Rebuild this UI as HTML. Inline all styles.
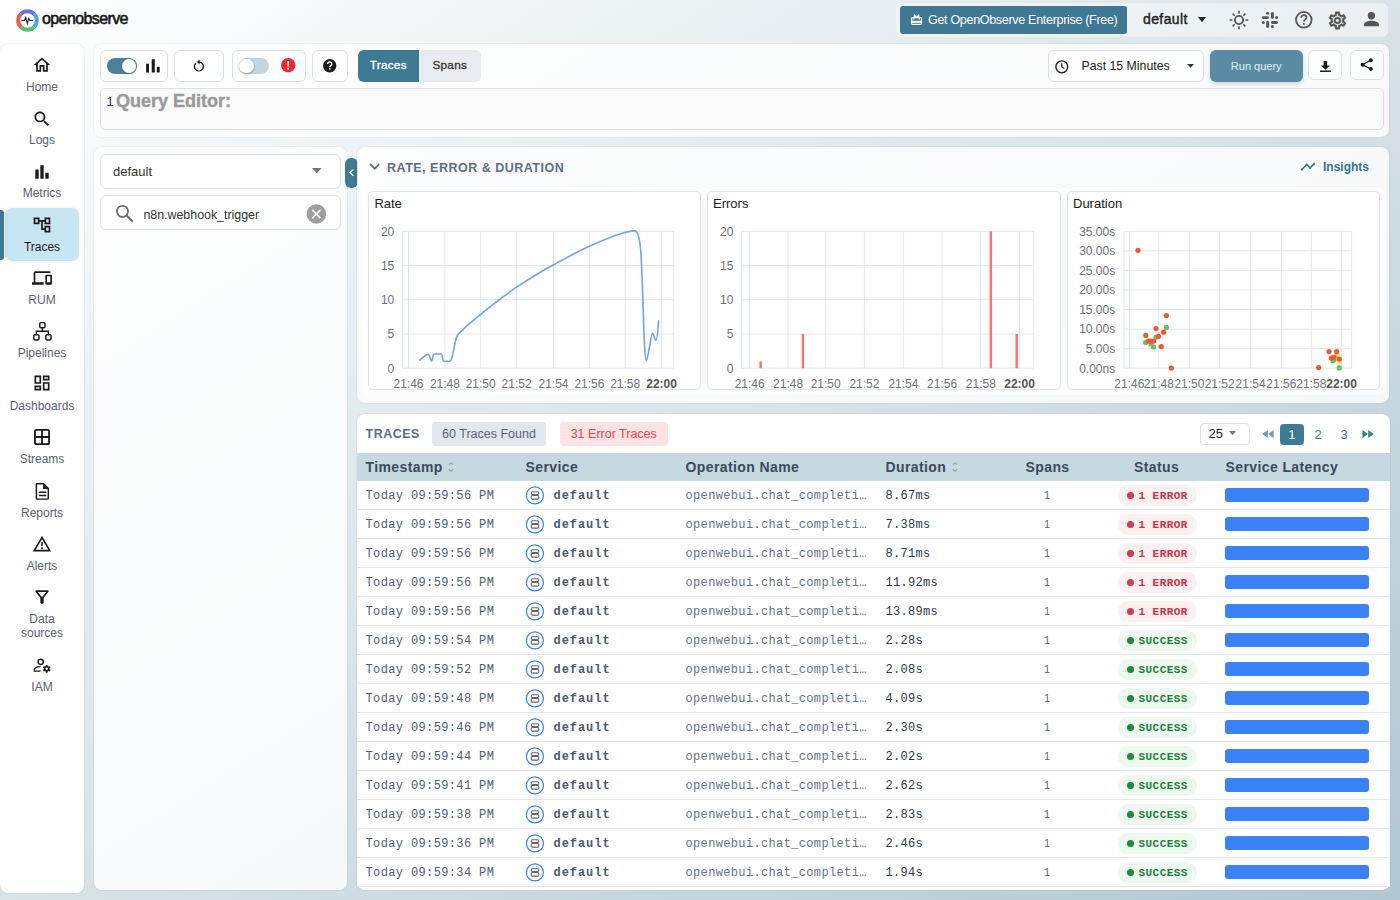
<!DOCTYPE html>
<html><head><meta charset="utf-8">
<style>
*{box-sizing:border-box;margin:0;padding:0}
html,body{width:1400px;height:900px;overflow:hidden}
body{font-family:"Liberation Sans",sans-serif;background:linear-gradient(to bottom right,#ffffff 0%,#d9e3e8 50%,#b0c7d2 100%);position:relative;color:#222}
.a{position:absolute}
.panel{position:absolute;background:rgba(255,255,255,0.8);border-radius:8px;box-shadow:0 0 2px rgba(0,0,0,0.13)}
svg{display:block;overflow:visible}
.nav{position:absolute;left:0;width:84px;text-align:center;font-size:12px;line-height:14px;color:#5b6272}
.nav svg{position:absolute;left:33px}
.nav span{position:absolute;left:0;width:84px}
.btn{position:absolute;border:1px solid #dcdfe3;border-radius:6px;background:rgba(255,255,255,0.6)}
.mono{font-family:"Liberation Mono",monospace}
.row{position:absolute;left:357px;width:1033px;height:29px;border-bottom:1px solid #e3e6ea;background:#fff}
.row div{position:absolute;top:0;line-height:30px;white-space:nowrap}
.ts{left:8.5px;font-size:12px;letter-spacing:0.37px;color:#4f5e73}
.svc{left:168px;top:5px!important}
.svn{left:196.5px;font-size:12px;font-weight:bold;letter-spacing:0.95px;color:#4d5a6c}
.op{left:328.5px;top:0.7px!important;font-size:12px;letter-spacing:0.35px;color:#667488}
.du{left:528.5px;top:0.7px!important;font-size:12px;letter-spacing:0.3px;color:#2d3a4c}
.sp{left:680px;width:20px;text-align:center;font-size:11px;line-height:28.5px!important;color:#5b6b80}
.badge{left:760.5px;top:4.5px!important;width:79.5px;height:20.5px;border-radius:10px;line-height:20.5px!important}
.badge i{position:absolute;left:9.5px;top:6.5px;width:7px;height:7px;border-radius:50%}
.badge b{position:absolute;left:21px;top:1px;font-size:11px;letter-spacing:0.45px;font-family:"Liberation Mono",monospace}
.err{background:#fdf0f1}
.err i{background:#d43a4d}
.err b{color:#cf3048}
.ok{background:#edf8ef}
.ok i{background:#1f8a3c}
.ok b{color:#1f7f38}
.lat{left:868px;top:7.5px!important;width:144px;height:14px;background:#3b82f6;border-radius:3px}
</style></head><body>

<!-- logo -->
<div class="a" style="left:16px;top:9px;width:23px;height:23px">
<svg width="23" height="23" viewBox="0 0 23 23">
<circle cx="11.5" cy="11.5" r="9.3" fill="none" stroke="#6c6fe0" stroke-width="4" stroke-dasharray="14.6 58.4" transform="rotate(-135 11.5 11.5)"/>
<circle cx="11.5" cy="11.5" r="9.3" fill="none" stroke="#42a5f5" stroke-width="4" stroke-dasharray="14.6 58.4" transform="rotate(-45 11.5 11.5)"/>
<circle cx="11.5" cy="11.5" r="9.3" fill="none" stroke="#5bbd6b" stroke-width="4" stroke-dasharray="14.6 58.4" transform="rotate(45 11.5 11.5)"/>
<circle cx="11.5" cy="11.5" r="9.3" fill="none" stroke="#ef5a4d" stroke-width="4" stroke-dasharray="14.6 58.4" transform="rotate(135 11.5 11.5)"/>
<path d="M5.5 11.5h3l1.2-3 1.6 6 1.4-5 1 2h3.5" fill="none" stroke="#222" stroke-width="1.1"/>
</svg></div>
<div class="a" style="left:42px;top:9.5px;font-size:16px;letter-spacing:-0.6px;-webkit-text-stroke:0.55px #111;color:#111">openobserve</div>

<!-- header right -->
<div class="a" style="left:896px;top:3px;width:492px;height:34px;background:rgba(255,255,255,0.45);border-radius:6px"></div>
<div class="a" style="left:900px;top:6px;width:227px;height:28px;background:#3e7894;border-radius:3px;color:#fff;font-size:12.5px;letter-spacing:-0.3px;line-height:28px;padding-left:28px">Get OpenObserve Enterprise (Free)</div>
<div class="a" style="left:1143px;top:11px;font-size:14px;letter-spacing:0.4px;-webkit-text-stroke:0.4px #222;color:#222">default</div>


<!-- header icons -->
<svg class="a" style="left:905px;top:8px" width="24" height="24" viewBox="0 0 24 24"><rect x="6.7" y="9.7" width="9.8" height="6.6" rx="0.8" stroke="#fff" stroke-width="1.2" fill="none"/><rect x="6.7" y="12.8" width="9.8" height="2" fill="#fff"/><path d="M8.7 11.6L9.6 6.9L11.6 9.6L13.6 6.9L14.5 11.6" stroke="#fff" stroke-width="1.1" fill="none" stroke-linejoin="round"/></svg>
<svg class="a" style="left:1198.3px;top:17.4px" width="8" height="5.2" viewBox="0 0 8 5.2"><path fill="#222" d="M0 0h8L4 5.2z"/></svg>
<svg class="a" style="left:1229.4px;top:10.1px" width="20" height="20" viewBox="0 0 20 20"><circle cx="10" cy="10" r="4.1" fill="none" stroke="#555" stroke-width="1.9"/><g stroke="#555" stroke-width="1.7" stroke-linecap="round"><path d="M10 1.4v1.4M10 17.2v1.4M1.4 10h1.4M17.2 10h1.4M4.2 4.2l.9.9M14.9 14.9l.9.9M4.2 15.8l.9-.9M14.9 5.1l.9-.9"/></g></svg>
<svg class="a" style="left:1258px;top:8px" width="24" height="24" viewBox="0 0 24 24"><g fill="#53565c"><rect x="12.9" y="3.9" width="2.9" height="7" rx="1.45"/><rect x="3.9" y="8.2" width="7" height="2.9" rx="1.45"/><rect x="13" y="13" width="7" height="2.9" rx="1.45"/><rect x="8.2" y="13" width="2.9" height="7" rx="1.45"/><circle cx="9.6" cy="5.3" r="1.5"/><circle cx="18.6" cy="9.6" r="1.5"/><circle cx="5.3" cy="14.4" r="1.5"/><circle cx="14.4" cy="18.6" r="1.5"/></g></svg>
<svg class="a" style="left:1294.9px;top:11.3px" width="17.6" height="17.6" viewBox="0 0 18 18"><circle cx="9" cy="9" r="8" fill="none" stroke="#555" stroke-width="1.8"/><path fill="none" stroke="#555" stroke-width="1.7" d="M6.2 7c0-1.6 1.2-2.8 2.8-2.8s2.8 1.1 2.8 2.5c0 1.9-2.6 2-2.6 4.1"/><rect x="8.2" y="12.4" width="1.8" height="1.8" fill="#555"/></svg>
<svg class="a" style="left:1326.9px;top:9.8px" width="21" height="21" viewBox="0 0 24 24"><path fill="#555" stroke="#555" stroke-width="0.5" d="M19.43 12.98c.04-.32.07-.64.07-.98 0-.34-.03-.66-.07-.98l2.11-1.65c.19-.15.24-.42.12-.64l-2-3.46c-.09-.16-.26-.25-.44-.25-.06 0-.12.01-.17.03l-2.49 1c-.52-.4-1.08-.73-1.69-.98l-.38-2.65C14.46 2.18 14.25 2 14 2h-4c-.25 0-.46.18-.49.42l-.38 2.65c-.61.25-1.17.59-1.69.98l-2.49-1c-.06-.02-.12-.03-.18-.03-.17 0-.34.09-.43.25l-2 3.46c-.13.22-.07.49.12.64l2.11 1.65c-.04.32-.07.65-.07.98 0 .33.03.66.07.98l-2.11 1.65c-.19.15-.24.42-.12.64l2 3.46c.09.16.26.25.44.25.06 0 .12-.01.17-.03l2.49-1c.52.4 1.08.73 1.69.98l.38 2.65c.03.24.24.42.49.42h4c.25 0 .46-.18.49-.42l.38-2.65c.61-.25 1.17-.59 1.69-.98l2.49 1c.06.02.12.03.18.03.17 0 .34-.09.43-.25l2-3.46c.12-.22.07-.49-.12-.64l-2.11-1.65zm-1.98-1.71c.04.31.05.52.05.73 0 .21-.02.43-.05.73l-.14 1.13.89.7 1.08.84-.7 1.21-1.27-.51-1.04-.42-.9.68c-.43.32-.84.56-1.25.73l-1.06.43-.16 1.13-.2 1.35h-1.4l-.19-1.35-.16-1.13-1.06-.43c-.43-.18-.83-.41-1.23-.71l-.91-.7-1.06.43-1.27.51-.7-1.21 1.08-.84.89-.7-.14-1.13c-.03-.31-.05-.54-.05-.74s.02-.43.05-.73l.14-1.13-.89-.7-1.08-.84.7-1.21 1.27.51 1.04.42.9-.68c.43-.32.84-.56 1.25-.73l1.06-.43.16-1.13.2-1.35h1.39l.19 1.35.16 1.13 1.06.43c.43.18.83.41 1.23.71l.91.7 1.06-.43 1.27-.51.7 1.21-1.07.85-.89.7.14 1.13zM12 8c-2.21 0-4 1.79-4 4s1.79 4 4 4 4-1.79 4-4-1.79-4-4-4zm0 6c-1.1 0-2-.9-2-2s.9-2 2-2 2 .9 2 2-.9 2-2 2z"/></svg>
<svg class="a" style="left:1363.6px;top:12.4px" width="14.8" height="14.4" viewBox="0 0 15 14.4"><circle cx="7.5" cy="3.7" r="3.7" fill="#555"/><path fill="#555" d="M0 14.4v-2c0-2.4 4.2-3.7 7.5-3.7s7.5 1.3 7.5 3.7v2z"/></svg>

<!-- sidebar -->
<div class="panel" style="left:0;top:44px;width:84px;height:849px;background:#fff"></div>
<div class="a" style="left:5px;top:208px;width:74px;height:53px;background:#c8e6f2;border-radius:7px;box-shadow:0 0 5px rgba(0,0,0,0.07)"></div>
<div class="a" style="left:0;top:210px;width:3.5px;height:50px;background:#3f7a94;border-radius:0 3px 3px 0;box-shadow:0 0 4px rgba(0,0,0,0.15)"></div>

<!--NAV-->
<div class="a" style="left:32px;top:55.4px"><svg width="20" height="20" viewBox="0 0 24 24" style="left:33px"><path fill="#1a1a1a" d="M12 5.69l5 4.5V18h-2v-6H9v6H7v-7.81l5-4.5M12 3L2 12h3v8h6v-6h2v6h6v-8h3L12 3z"/></svg></div>
<div class="a" style="left:0;top:80.4px;width:84px;text-align:center;font-size:12px;line-height:14px;color:#5b6272">Home</div>
<div class="a" style="left:32px;top:108.8px"><svg width="20" height="20" viewBox="0 0 24 24"><path fill="#1a1a1a" d="M15.5 14h-.79l-.28-.27C15.41 12.59 16 11.11 16 9.5 16 5.91 13.09 3 9.5 3S3 5.91 3 9.5 5.91 16 9.5 16c1.61 0 3.09-.59 4.23-1.57l.27.28v.79l5 4.99L20.49 19l-4.99-5zm-6 0C7.01 14 5 11.99 5 9.5S7.01 5 9.5 5 14 7.01 14 9.5 11.99 14 9.5 14z"/></svg></div>
<div class="a" style="left:0;top:133.1px;width:84px;text-align:center;font-size:12px;line-height:14px;color:#5b6272">Logs</div>
<div class="a" style="left:32px;top:161.7px"><svg width="20" height="20" viewBox="0 0 24 24"><path fill="#1a1a1a" d="M4 9h4v11H4zm12 4h4v7h-4zm-6-9h4v16h-4z"/></svg></div>
<div class="a" style="left:0;top:186.2px;width:84px;text-align:center;font-size:12px;line-height:14px;color:#5b6272">Metrics</div>
<div class="a" style="left:32px;top:214.8px"><svg width="20" height="20" viewBox="0 0 24 24"><path fill="#1a1a1a" d="M22 11V3h-7v3H9V3H2v8h7V8h2v10h4v3h7v-8h-7v3h-2V8h2v3h7zM7 9H4V5h3v4zm10 6h3v4h-3v-4zm0-10h3v4h-3V5z"/></svg></div>
<div class="a" style="left:0;top:240.4px;width:84px;text-align:center;font-size:12px;line-height:14px;color:#1a1a1a">Traces</div>
<div class="a" style="left:32px;top:268.0px"><svg width="20" height="20" viewBox="0 0 24 24"><path fill="#1a1a1a" d="M4 6h18V4H4c-1.1 0-2 .9-2 2v11H0v3h14v-3H4V6zm19 2h-6c-.55 0-1 .45-1 1v10c0 .55.45 1 1 1h6c.55 0 1-.45 1-1V9c0-.55-.45-1-1-1zm-1 9h-4v-7h4v7z"/></svg></div>
<div class="a" style="left:0;top:293.4px;width:84px;text-align:center;font-size:12px;line-height:14px;color:#5b6272">RUM</div>
<div class="a" style="left:32px;top:321.4px"><svg width="24" height="26" viewBox="30 318 24 26" style="position:absolute;left:-2px;top:-3.4px"><g fill="none" stroke="#1a1a1a" stroke-width="1.45"><rect x="39.8" y="322.6" width="5.2" height="5.2" rx="1.1"/><rect x="33.8" y="334.7" width="5.2" height="5.2" rx="1.1"/><rect x="45.8" y="334.7" width="5.2" height="5.2" rx="1.1"/><path d="M42.4 327.8V331.3M36.4 334.7V331.3H48.4V334.7"/></g></svg></div>
<div class="a" style="left:0;top:346.2px;width:84px;text-align:center;font-size:12px;line-height:14px;color:#5b6272">Pipelines</div>
<div class="a" style="left:32px;top:373.4px"><svg width="20" height="20" viewBox="0 0 24 24"><path fill="#1a1a1a" d="M19 5v2h-4V5h4M9 5v6H5V5h4m10 8v6h-4v-6h4M9 17v2H5v-2h4M21 3h-8v6h8V3zM11 3H3v10h8V3zm10 8h-8v10h8V11zm-10 4H3v6h8v-6z"/></svg></div>
<div class="a" style="left:0;top:399.4px;width:84px;text-align:center;font-size:12px;line-height:14px;color:#5b6272">Dashboards</div>
<div class="a" style="left:32px;top:426.7px"><svg width="20" height="20" viewBox="0 0 24 24"><g fill="none" stroke="#1a1a1a" stroke-width="2.2"><rect x="3.5" y="3.5" width="17" height="17" rx="2"/><path d="M12 3.5v17M3.5 12h17"/></g></svg></div>
<div class="a" style="left:0;top:452.2px;width:84px;text-align:center;font-size:12px;line-height:14px;color:#5b6272">Streams</div>
<div class="a" style="left:32px;top:480.2px"><svg width="24" height="26" viewBox="30 478 24 26" style="position:absolute;left:-2px;top:-2.2px"><path fill="none" stroke="#1a1a1a" stroke-width="1.45" stroke-linejoin="round" d="M36.4 483.8H43.6L48.3 488.5V498.3C48.3 498.8 47.9 499.1 47.4 499.1H37.3C36.8 499.1 36.4 498.8 36.4 498.3Z"/><path fill="#1a1a1a" d="M43.1 483.4V489H48.7Z"/><path stroke="#1a1a1a" stroke-width="1.4" stroke-linecap="round" d="M39.4 492.3H45.7M39.4 495.5H45.7"/></svg></div>
<div class="a" style="left:0;top:506.2px;width:84px;text-align:center;font-size:12px;line-height:14px;color:#5b6272">Reports</div>
<div class="a" style="left:32px;top:533.7px"><svg width="20" height="20" viewBox="0 0 24 24"><path fill="#1a1a1a" d="M12 5.99L19.53 19H4.47L12 5.99M12 2L1 21h22L12 2zm1 14h-2v2h2v-2zm0-6h-2v4h2v-4z"/></svg></div>
<div class="a" style="left:0;top:559.2px;width:84px;text-align:center;font-size:12px;line-height:14px;color:#5b6272">Alerts</div>
<div class="a" style="left:32px;top:587.4px"><svg width="20" height="20" viewBox="0 0 24 24"><path fill="#1a1a1a" d="M7 6h10l-5.01 6.3L7 6zm-2.75-.39C6.27 8.2 10 13 10 13v6c0 .55.45 1 1 1h2c.55 0 1-.45 1-1v-6s3.72-4.8 5.74-7.39c.51-.66.04-1.61-.79-1.61H5.04c-.83 0-1.3.95-.79 1.61z"/></svg></div>
<div class="a" style="left:0;top:612.4px;width:84px;text-align:center;font-size:12px;line-height:14px;color:#5b6272">Data<br>sources</div>
<div class="a" style="left:32px;top:656.4px"><svg width="24" height="22" viewBox="30 655 24 22" style="position:absolute;left:-2px;top:-1.4px"><g fill="none" stroke="#1a1a1a" stroke-width="1.45"><circle cx="40.7" cy="661.8" r="2.6"/><path d="M40.5 666.6C37.5 666.8 34.6 667.8 34.4 669.2V671.1H40.6"/></g><path fill="#1a1a1a" fill-rule="evenodd" d="M48.12 666.33L47.67 666.12L47.59 664.95L45.81 664.95L45.73 666.12L45.28 666.33L44.87 666.62L43.81 666.11L42.92 667.65L43.89 668.31L43.85 668.80L43.89 669.29L42.92 669.95L43.81 671.49L44.87 670.98L45.27 671.27L45.73 671.48L45.81 672.65L47.59 672.65L47.67 671.48L48.12 671.27L48.53 670.98L49.59 671.49L50.48 669.95L49.51 669.29L49.55 668.80L49.51 668.31L50.48 667.65L49.59 666.11L48.53 666.62ZM47.95 668.80A1.25 1.25 0 1 0 45.45 668.80A1.25 1.25 0 1 0 47.95 668.80Z"/></svg></div>
<div class="a" style="left:0;top:680.1px;width:84px;text-align:center;font-size:12px;line-height:14px;color:#5b6272">IAM</div>
<!--/NAV-->
<!-- main toolbar panel -->
<div class="panel" style="left:94px;top:44px;width:1295px;height:92.5px"></div>
<div class="btn" style="left:100px;top:50px;width:68px;height:32px"></div>
<div class="btn" style="left:174px;top:50px;width:50px;height:32px"></div>
<div class="btn" style="left:232px;top:50px;width:73.5px;height:32px"></div>
<div class="btn" style="left:312px;top:50px;width:36px;height:32px"></div>
<div class="a" style="left:358px;top:50px;width:123px;height:32px;background:#e8ebef;border-radius:6px"></div>
<div class="a" style="left:358px;top:50px;width:60.5px;height:32px;background:#3f7a94;border-radius:6px 0 0 6px;color:#fff;font-size:11.8px;letter-spacing:0.25px;-webkit-text-stroke:0.3px #fff;line-height:30.5px;text-align:center">Traces</div>
<div class="a" style="left:418.5px;top:50px;width:62.5px;height:32px;color:#333;font-size:11.8px;letter-spacing:0.25px;-webkit-text-stroke:0.3px #333;line-height:30.5px;text-align:center">Spans</div>

<div class="btn" style="left:1048px;top:50px;width:156px;height:32px"></div>
<div class="a" style="left:1081.5px;top:50px;font-size:12.3px;line-height:32px;color:#222">Past 15 Minutes</div>
<div class="a" style="left:1210px;top:49.5px;width:92.5px;height:32px;background:#5a8ba3;border-radius:6px;box-shadow:0 2px 4px rgba(0,0,0,0.15);color:#e8f0f4;font-size:11px;line-height:32px;text-align:center">Run query</div>
<div class="btn" style="left:1308px;top:50.3px;width:33.5px;height:29.5px"></div>
<div class="btn" style="left:1350px;top:50.3px;width:33.6px;height:29.5px"></div>


<!-- toolbar icons -->
<div class="a" style="left:107px;top:58px;width:30px;height:16px;background:#4a8099;border-radius:8px"></div>
<div class="a" style="left:121.8px;top:58.7px;width:14.6px;height:14.6px;background:#fff;border-radius:50%;box-shadow:0 0 0 0.6px #4a8099,0 1px 2px rgba(0,0,0,0.25)"></div>
<svg class="a" style="left:146px;top:59px" width="14" height="14" viewBox="0 0 14 14"><path fill="#1a1a1a" d="M0.1 4.7h2.9v8.9H0.1zM5.7 0.3h3.1v13.3H5.7zM10.8 7.7h2.9v5.9h-2.9z"/></svg>
<svg class="a" style="left:191px;top:58px" width="16" height="16" viewBox="0 0 16 16"><path fill="none" stroke="#1a1a1a" stroke-width="1.35" d="M8.3 3.95A4.5 4.5 0 1 1 4.72 5.22"/><path fill="#1a1a1a" d="M5.9 4L8.6 1.5V6.5z"/><rect x="7.5" y="12" width="0.9" height="1.6" fill="#fff"/></svg>
<div class="a" style="left:239.3px;top:58px;width:29.7px;height:16px;background:#c3d6de;border-radius:8px"></div>
<div class="a" style="left:239.4px;top:58.5px;width:14.6px;height:14.6px;background:#fff;border-radius:50%;box-shadow:0 1px 2.5px rgba(0,0,0,0.35)"></div>
<svg class="a" style="left:280.6px;top:58px" width="14.4" height="14.4" viewBox="0 0 14 14"><circle cx="7" cy="7" r="7" fill="#f4252f"/><path fill="#fff" d="M6.1 2.9h1.8l-.25 5.3h-1.3zM6.1 9.4h1.8v1.7h-1.8z"/></svg>
<svg class="a" style="left:322.8px;top:59.2px" width="13.4" height="13.4" viewBox="0 0 14 14"><circle cx="7" cy="7" r="7" fill="#1a1a1a"/><path fill="none" stroke="#fff" stroke-width="1.5" d="M4.8 5.3c0-1.3 1-2.2 2.2-2.2s2.2.9 2.2 2.1c0 1.5-2 1.6-2 3.3"/><rect x="6.3" y="9.6" width="1.5" height="1.5" fill="#fff"/></svg>
<svg class="a" style="left:1054.9px;top:59.5px" width="13.6" height="13.6" viewBox="0 0 14 14"><circle cx="7" cy="7" r="6.1" fill="none" stroke="#222" stroke-width="1.5"/><path fill="none" stroke="#222" stroke-width="1.4" d="M7 3.4V7.2l2.6 1.6"/></svg>
<svg class="a" style="left:1186.7px;top:64px" width="7" height="4" viewBox="0 0 7 4"><path fill="#333" d="M0 0h7L3.5 3.8z"/></svg>
<svg class="a" style="left:1319.8px;top:60.8px" width="10.8" height="11.2" viewBox="0 0 11 11.2"><path fill="#1a1a1a" d="M3.7 0h3.6v4.4h2.9L5.5 8.8 0.8 4.4h2.9zM0 9.5h11v1.7H0z"/></svg>
<svg class="a" style="left:1360px;top:58.2px" width="13.6" height="13.4" viewBox="0 0 14 14"><circle cx="11.2" cy="2.4" r="2.1" fill="#1a1a1a"/><circle cx="2.6" cy="7" r="2.1" fill="#1a1a1a"/><circle cx="11.2" cy="11.6" r="2.1" fill="#1a1a1a"/><path fill="none" stroke="#1a1a1a" stroke-width="1.3" d="M11.2 2.4L2.6 7l8.6 4.6"/></svg>

<div class="a" style="left:100px;top:88px;width:1284px;height:42px;border:1px solid #dcdfe3;border-radius:5px;background:#fafafa"></div>
<div class="a" style="left:106.5px;top:94px;font-size:13px;color:#26347f">1</div>
<div class="a" style="left:116px;top:91px;font-size:18px;font-weight:bold;color:#9a9a9a;-webkit-text-stroke:0.4px #9a9a9a">Query Editor:</div>

<!-- left stream panel -->
<div class="panel" style="left:94px;top:147px;width:253px;height:743px"></div>
<div class="a" style="left:100px;top:153.5px;width:240.5px;height:35px;border:1px solid #dcdfe3;border-radius:6px;background:#fff"></div>
<div class="a" style="left:113px;top:164px;font-size:13px;color:#333">default</div>
<div class="a" style="left:100px;top:195.2px;width:240.5px;height:34.8px;border:1px solid #dcdfe3;border-radius:6px;background:#fff"></div>
<div class="a" style="left:143.4px;top:207.5px;font-size:12.4px;color:#333">n8n.webhook_trigger</div>

<div class="a" style="left:344.5px;top:158px;width:13px;height:30px;background:#3f7a94;border-radius:6px"></div>


<svg class="a" style="left:311.5px;top:167.8px" width="9.7" height="5.2" viewBox="0 0 9.7 5.2"><path fill="#757575" d="M0 0h9.7L4.85 5.2z"/></svg>
<svg class="a" style="left:114px;top:203px" width="20" height="20" viewBox="0 0 20 20"><circle cx="8.45" cy="8.36" r="5.55" fill="none" stroke="#6b6b6b" stroke-width="1.7"/><path stroke="#6b6b6b" stroke-width="2.1" stroke-linecap="round" d="M13.1 13.1L18.2 18.1"/></svg>
<svg class="a" style="left:306px;top:204px" width="20" height="20" viewBox="0 0 20 20"><circle cx="10.4" cy="9.9" r="9.75" fill="#9e9e9e"/><path stroke="#fff" stroke-width="1.6" d="M6.2 5.8L14.6 14.2M14.6 5.8L6.2 14.2"/></svg>
<svg class="a" style="left:344.5px;top:158px" width="13" height="30" viewBox="0 0 13 30"><path fill="none" stroke="#fff" stroke-width="1.2" d="M8.4 11.5L4.8 14.5L8.4 17.7"/></svg>

<!-- charts panel -->
<div class="panel" style="left:357px;top:147px;width:1032px;height:255.5px"></div>
<div class="a" style="left:387px;top:161px;font-size:12.5px;font-weight:bold;letter-spacing:0.5px;color:#5d6e85">RATE, ERROR &amp; DURATION</div>

<svg class="a" style="left:368px;top:161px" width="14" height="10" viewBox="0 0 14 10"><path fill="none" stroke="#5d6e85" stroke-width="1.7" d="M2.2 3.2L6.7 7.7L11.2 3.2"/></svg>
<svg class="a" style="left:1300px;top:162px" width="16" height="9" viewBox="0 0 16 9"><path fill="none" stroke="#3a7490" stroke-width="1.5" stroke-linejoin="round" d="M1.9 7.6L6.7 2.4L10 6L14.1 1.9"/><g fill="#3a7490"><circle cx="1.9" cy="7.6" r="1.1"/><circle cx="6.7" cy="2.4" r="1"/><circle cx="10" cy="6" r="1"/><circle cx="14.1" cy="1.9" r="1.1"/></g></svg>
<div class="a" style="left:1323px;top:159.5px;font-size:12px;font-weight:bold;color:#3a7490">Insights</div>
<div class="a" style="left:361px;top:187.5px;width:1025px;height:207px;background:rgba(255,255,255,0.6);border-radius:7px"></div>
<div class="a" style="left:368px;top:191px;width:333px;height:199px;border:1px solid #e2e4e8;border-radius:5px;background:#fff"></div>
<div class="a" style="left:706.5px;top:191px;width:354px;height:199px;border:1px solid #e2e4e8;border-radius:5px;background:#fff"></div>
<div class="a" style="left:1066.5px;top:191px;width:313px;height:199px;border:1px solid #e2e4e8;border-radius:5px;background:#fff"></div>
<div class="a" style="left:374.4px;top:196px;font-size:13px;color:#222">Rate</div>
<div class="a" style="left:713px;top:196px;font-size:13px;color:#222">Errors</div>
<div class="a" style="left:1073px;top:196px;font-size:13px;color:#222">Duration</div>

<!--CHARTS-->
<svg class="a" style="left:0;top:0;font-family:'Liberation Sans',sans-serif" width="1400" height="400" viewBox="0 0 1400 400"><g stroke="#e0e6f1" stroke-width="1"><line x1="402.2" y1="231.30" x2="673.8" y2="231.30"/><line x1="402.2" y1="265.52" x2="673.8" y2="265.52"/><line x1="402.2" y1="299.75" x2="673.8" y2="299.75"/><line x1="402.2" y1="333.98" x2="673.8" y2="333.98"/><line x1="402.2" y1="368.20" x2="673.8" y2="368.20"/><line x1="408.50" y1="231.3" x2="408.50" y2="368.2"/><line x1="444.90" y1="231.3" x2="444.90" y2="368.2"/><line x1="480.70" y1="231.3" x2="480.70" y2="368.2"/><line x1="516.60" y1="231.3" x2="516.60" y2="368.2"/><line x1="553.50" y1="231.3" x2="553.50" y2="368.2"/><line x1="589.40" y1="231.3" x2="589.40" y2="368.2"/><line x1="625.20" y1="231.3" x2="625.20" y2="368.2"/><line x1="661.60" y1="231.3" x2="661.60" y2="368.2"/><line x1="402.20" y1="231.3" x2="402.20" y2="368.2"/><line x1="673.80" y1="231.3" x2="673.80" y2="368.2"/></g><g font-size="12" fill="#6e7079"><text x="394.3" y="372.50" text-anchor="end">0</text><text x="394.3" y="338.28" text-anchor="end">5</text><text x="394.3" y="304.05" text-anchor="end">10</text><text x="394.3" y="269.82" text-anchor="end">15</text><text x="394.3" y="235.60" text-anchor="end">20</text><text x="408.50" y="387.8" text-anchor="middle">21:46</text><text x="444.90" y="387.8" text-anchor="middle">21:48</text><text x="480.70" y="387.8" text-anchor="middle">21:50</text><text x="516.60" y="387.8" text-anchor="middle">21:52</text><text x="553.50" y="387.8" text-anchor="middle">21:54</text><text x="589.40" y="387.8" text-anchor="middle">21:56</text><text x="625.20" y="387.8" text-anchor="middle">21:58</text><text x="661.60" y="387.8" text-anchor="middle" font-weight="bold" fill="#555">22:00</text></g><path d="M419.4 360.6C422 358.2 425.5 354.6 428.3 354.2C429.9 354.1 430.3 361.2 431.4 361.2C432.5 361.2 432.6 354 434.2 354L441.1 354C442.6 354 442.3 361.2 443.9 361.2L450 361.2C451.3 361.2 452.2 357 453.9 348.9C455.1 342 455.6 337.8 457.8 334.7C461 331 465 327.4 469.7 323.3C474 319.8 477 317.2 480.7 314.3C493 304.5 504 295.4 516.5 287.2C529 279 541 271.6 553.5 264.8C565.5 258.3 577.3 251.8 589.4 246.3C604 239.7 618 234 628 231.8C632 230.9 634 230.6 635.5 231.1C637.5 232 639 236 640 243.7C641 251 641.5 262 642.2 280C643 302 643.6 325 644.2 338.7C644.8 352 645.4 360.7 646.3 360.7C647.2 360.7 648.2 353 649.2 348.7C650.3 344 651.4 333.5 652.5 333.3C653.6 333.1 654.7 340.3 655.8 340.3C657 340.3 658 330 658.7 320.3" fill="none" stroke="#6fa2f2" stroke-width="1.6" stroke-linejoin="round"/><g stroke="#e0e6f1" stroke-width="1"><line x1="741.3" y1="231.30" x2="1033.7" y2="231.30"/><line x1="741.3" y1="265.52" x2="1033.7" y2="265.52"/><line x1="741.3" y1="299.75" x2="1033.7" y2="299.75"/><line x1="741.3" y1="333.98" x2="1033.7" y2="333.98"/><line x1="741.3" y1="368.20" x2="1033.7" y2="368.20"/><line x1="749.70" y1="231.3" x2="749.70" y2="368.2"/><line x1="788.10" y1="231.3" x2="788.10" y2="368.2"/><line x1="825.70" y1="231.3" x2="825.70" y2="368.2"/><line x1="864.40" y1="231.3" x2="864.40" y2="368.2"/><line x1="903.40" y1="231.3" x2="903.40" y2="368.2"/><line x1="942.10" y1="231.3" x2="942.10" y2="368.2"/><line x1="980.80" y1="231.3" x2="980.80" y2="368.2"/><line x1="1019.60" y1="231.3" x2="1019.60" y2="368.2"/><line x1="741.30" y1="231.3" x2="741.30" y2="368.2"/><line x1="1033.70" y1="231.3" x2="1033.70" y2="368.2"/></g><g font-size="12" fill="#6e7079"><text x="733.4" y="372.50" text-anchor="end">0</text><text x="733.4" y="338.28" text-anchor="end">5</text><text x="733.4" y="304.05" text-anchor="end">10</text><text x="733.4" y="269.82" text-anchor="end">15</text><text x="733.4" y="235.60" text-anchor="end">20</text><text x="749.70" y="387.8" text-anchor="middle">21:46</text><text x="788.10" y="387.8" text-anchor="middle">21:48</text><text x="825.70" y="387.8" text-anchor="middle">21:50</text><text x="864.40" y="387.8" text-anchor="middle">21:52</text><text x="903.40" y="387.8" text-anchor="middle">21:54</text><text x="942.10" y="387.8" text-anchor="middle">21:56</text><text x="980.80" y="387.8" text-anchor="middle">21:58</text><text x="1019.60" y="387.8" text-anchor="middle" font-weight="bold" fill="#555">22:00</text></g><rect x="759.45" y="361.36" width="2.5" height="6.84" fill="#f87575"/><rect x="801.65" y="333.98" width="2.5" height="34.22" fill="#f87575"/><rect x="989.55" y="231.30" width="2.5" height="136.90" fill="#f87575"/><rect x="1015.45" y="333.98" width="2.5" height="34.22" fill="#f87575"/><g stroke="#e0e6f1" stroke-width="1"><line x1="1124.1" y1="231.30" x2="1351.7" y2="231.30"/><line x1="1124.1" y1="250.86" x2="1351.7" y2="250.86"/><line x1="1124.1" y1="270.41" x2="1351.7" y2="270.41"/><line x1="1124.1" y1="289.97" x2="1351.7" y2="289.97"/><line x1="1124.1" y1="309.53" x2="1351.7" y2="309.53"/><line x1="1124.1" y1="329.09" x2="1351.7" y2="329.09"/><line x1="1124.1" y1="348.64" x2="1351.7" y2="348.64"/><line x1="1124.1" y1="368.20" x2="1351.7" y2="368.20"/><line x1="1129.30" y1="231.3" x2="1129.30" y2="368.2"/><line x1="1158.80" y1="231.3" x2="1158.80" y2="368.2"/><line x1="1189.40" y1="231.3" x2="1189.40" y2="368.2"/><line x1="1219.70" y1="231.3" x2="1219.70" y2="368.2"/><line x1="1250.60" y1="231.3" x2="1250.60" y2="368.2"/><line x1="1281.30" y1="231.3" x2="1281.30" y2="368.2"/><line x1="1311.30" y1="231.3" x2="1311.30" y2="368.2"/><line x1="1341.60" y1="231.3" x2="1341.60" y2="368.2"/><line x1="1124.10" y1="231.3" x2="1124.10" y2="368.2"/><line x1="1351.70" y1="231.3" x2="1351.70" y2="368.2"/></g><g font-size="12" fill="#6e7079"><text x="1115.2" y="372.50" text-anchor="end">0.00ns</text><text x="1115.2" y="352.94" text-anchor="end">5.00s</text><text x="1115.2" y="333.39" text-anchor="end">10.00s</text><text x="1115.2" y="313.83" text-anchor="end">15.00s</text><text x="1115.2" y="294.27" text-anchor="end">20.00s</text><text x="1115.2" y="274.71" text-anchor="end">25.00s</text><text x="1115.2" y="255.16" text-anchor="end">30.00s</text><text x="1115.2" y="235.60" text-anchor="end">35.00s</text><text x="1129.30" y="387.8" text-anchor="middle">21:46</text><text x="1158.80" y="387.8" text-anchor="middle">21:48</text><text x="1189.40" y="387.8" text-anchor="middle">21:50</text><text x="1219.70" y="387.8" text-anchor="middle">21:52</text><text x="1250.60" y="387.8" text-anchor="middle">21:54</text><text x="1281.30" y="387.8" text-anchor="middle">21:56</text><text x="1311.30" y="387.8" text-anchor="middle">21:58</text><text x="1341.60" y="387.8" text-anchor="middle" font-weight="bold" fill="#555">22:00</text></g><g fill="#6abf69"><circle cx="1166.4" cy="327.4" r="2.6"/><circle cx="1156" cy="337.2" r="2.6"/><circle cx="1145.6" cy="342.4" r="2.6"/><circle cx="1151" cy="344" r="2.6"/><circle cx="1153.4" cy="347" r="2.6"/><circle cx="1332.8" cy="360.6" r="2.6"/><circle cx="1339.3" cy="367.9" r="2.6"/><circle cx="1334" cy="360" r="2.6"/></g><g fill="#e9e779"><circle cx="1337.7" cy="355.3" r="2.6"/><circle cx="1339.2" cy="361.7" r="2.6"/></g><g fill="#f1582a"><circle cx="1138" cy="250.3" r="2.6"/><circle cx="1166.4" cy="315.6" r="2.6"/><circle cx="1156" cy="328.6" r="2.6"/><circle cx="1163.6" cy="332.2" r="2.6"/><circle cx="1145.8" cy="335.4" r="2.6"/><circle cx="1158.4" cy="336.4" r="2.6"/><circle cx="1148.4" cy="341" r="2.6"/><circle cx="1151" cy="341" r="2.6"/><circle cx="1153.6" cy="341" r="2.6"/><circle cx="1161.2" cy="346.6" r="2.6"/><circle cx="1171.4" cy="368" r="2.6"/><circle cx="1318.7" cy="367.6" r="2.6"/><circle cx="1329" cy="351.6" r="2.6"/><circle cx="1336.7" cy="351.7" r="2.6"/><circle cx="1331.3" cy="358.1" r="2.6"/><circle cx="1334.2" cy="357.1" r="2.6"/><circle cx="1339.3" cy="359" r="2.6"/></g></svg>
<!--/CHARTS-->
<!-- traces panel -->
<div class="panel" style="left:357px;top:413.5px;width:1033px;height:476.5px;background:#fff"></div>
<div class="a" style="left:365.5px;top:427px;font-size:12.5px;font-weight:bold;letter-spacing:0.5px;color:#5d6e85">TRACES</div>
<div class="a" style="left:432px;top:422px;width:114px;height:23.5px;background:#e1e7ee;border-radius:4px;color:#596577;font-size:12.5px;line-height:25px;text-align:center">60 Traces Found</div>
<div class="a" style="left:560px;top:422px;width:107.5px;height:23.5px;background:#fde3e3;border-radius:4px;color:#e5484d;font-size:12.5px;line-height:25px;text-align:center">31 Error Traces</div>
<div class="a" style="left:1199.5px;top:422.5px;width:50px;height:22px;border:1px solid #dcdfe3;border-radius:4px;background:#fff"></div>
<div class="a" style="left:1208.5px;top:422.5px;font-size:13px;line-height:22px;color:#222">25</div>
<div class="a" style="left:1280px;top:423.5px;width:23.5px;height:21px;background:#3f7a94;border-radius:4px;color:#fff;font-size:13px;line-height:21px;text-align:center">1</div>
<div class="a" style="left:1310px;top:423.5px;width:16px;font-size:13px;line-height:21px;text-align:center;color:#3f7a94">2</div>
<div class="a" style="left:1336px;top:423.5px;width:16px;font-size:13px;line-height:21px;text-align:center;color:#3f7a94">3</div>

<div class="a" style="left:357px;top:453px;width:1033px;height:27.5px;background:#c6d8e0"></div>
<div class="a" style="left:365.5px;top:454px;line-height:27.5px;font-size:14px;font-weight:bold;letter-spacing:0.4px;color:#3c4a5c">Timestamp</div>
<div class="a" style="left:525.5px;top:454px;line-height:27.5px;font-size:14px;font-weight:bold;letter-spacing:0.4px;color:#3c4a5c">Service</div>
<div class="a" style="left:685.5px;top:454px;line-height:27.5px;font-size:14px;font-weight:bold;letter-spacing:0.4px;color:#3c4a5c">Operation Name</div>
<div class="a" style="left:885.5px;top:454px;line-height:27.5px;font-size:14px;font-weight:bold;letter-spacing:0.4px;color:#3c4a5c">Duration</div>
<div class="a" style="left:1025.5px;top:454px;line-height:27.5px;font-size:14px;font-weight:bold;letter-spacing:0.4px;color:#3c4a5c">Spans</div>
<div class="a" style="left:1134px;top:454px;line-height:27.5px;font-size:14px;font-weight:bold;letter-spacing:0.4px;color:#3c4a5c">Status</div>
<div class="a" style="left:1225.5px;top:454px;line-height:27.5px;font-size:14px;font-weight:bold;letter-spacing:0.4px;color:#3c4a5c">Service Latency</div>


<svg class="a" style="left:1229px;top:431px" width="7" height="4.2" viewBox="0 0 7 4.2"><path fill="#777" d="M0 0h7L3.5 4.2z"/></svg>
<svg class="a" style="left:1262px;top:430px" width="12" height="8" viewBox="0 0 12 8"><path fill="#6b9bb2" d="M0.2 4L5.8 0V8zM6 4L11.6 0V8z"/></svg>
<svg class="a" style="left:1362px;top:430px" width="12" height="8" viewBox="0 0 12 8"><path fill="#3f7a94" d="M11.8 4L6.2 0V8zM6 4L0.4 0V8z"/></svg>
<svg class="a" style="left:447px;top:461px" width="8" height="12" viewBox="0 0 8 12"><path fill="none" stroke="#8a9aaa" stroke-width="1.1" d="M1.9 3.6L4.1 1.7L6.3 3.6M1.9 8.3L4.1 10.3L6.3 8.3"/></svg>
<svg class="a" style="left:951px;top:461px" width="8" height="12" viewBox="0 0 8 12"><path fill="none" stroke="#8a9aaa" stroke-width="1.1" d="M1.9 3.6L4.1 1.7L6.3 3.6M1.9 8.3L4.1 10.3L6.3 8.3"/></svg>

<!--ROWS-->
<div class="row" style="top:480.5px"><div class="ts mono">Today 09:59:56 PM</div><div class="svc"><svg width="20" height="20" viewBox="0 0 20 20"><circle cx="9.9" cy="9.4" r="8.55" fill="none" stroke="#3b82f6" stroke-width="1.25"/><rect x="6.2" y="5.7" width="7.6" height="2.8" rx="1.2" fill="none" stroke="#5a6474" stroke-width="1.1"/><rect x="6.2" y="9.5" width="7.6" height="3.6" rx="1.2" fill="none" stroke="#5a6474" stroke-width="1.1"/></svg></div><div class="svn mono">default</div><div class="op mono">openwebui.chat_completi…</div><div class="du mono">8.67ms</div><div class="sp">1</div><div class="badge err"><i></i><b>1 ERROR</b></div><div class="lat"></div></div>
<div class="row" style="top:509.5px"><div class="ts mono">Today 09:59:56 PM</div><div class="svc"><svg width="20" height="20" viewBox="0 0 20 20"><circle cx="9.9" cy="9.4" r="8.55" fill="none" stroke="#3b82f6" stroke-width="1.25"/><rect x="6.2" y="5.7" width="7.6" height="2.8" rx="1.2" fill="none" stroke="#5a6474" stroke-width="1.1"/><rect x="6.2" y="9.5" width="7.6" height="3.6" rx="1.2" fill="none" stroke="#5a6474" stroke-width="1.1"/></svg></div><div class="svn mono">default</div><div class="op mono">openwebui.chat_completi…</div><div class="du mono">7.38ms</div><div class="sp">1</div><div class="badge err"><i></i><b>1 ERROR</b></div><div class="lat"></div></div>
<div class="row" style="top:538.5px"><div class="ts mono">Today 09:59:56 PM</div><div class="svc"><svg width="20" height="20" viewBox="0 0 20 20"><circle cx="9.9" cy="9.4" r="8.55" fill="none" stroke="#3b82f6" stroke-width="1.25"/><rect x="6.2" y="5.7" width="7.6" height="2.8" rx="1.2" fill="none" stroke="#5a6474" stroke-width="1.1"/><rect x="6.2" y="9.5" width="7.6" height="3.6" rx="1.2" fill="none" stroke="#5a6474" stroke-width="1.1"/></svg></div><div class="svn mono">default</div><div class="op mono">openwebui.chat_completi…</div><div class="du mono">8.71ms</div><div class="sp">1</div><div class="badge err"><i></i><b>1 ERROR</b></div><div class="lat"></div></div>
<div class="row" style="top:567.5px"><div class="ts mono">Today 09:59:56 PM</div><div class="svc"><svg width="20" height="20" viewBox="0 0 20 20"><circle cx="9.9" cy="9.4" r="8.55" fill="none" stroke="#3b82f6" stroke-width="1.25"/><rect x="6.2" y="5.7" width="7.6" height="2.8" rx="1.2" fill="none" stroke="#5a6474" stroke-width="1.1"/><rect x="6.2" y="9.5" width="7.6" height="3.6" rx="1.2" fill="none" stroke="#5a6474" stroke-width="1.1"/></svg></div><div class="svn mono">default</div><div class="op mono">openwebui.chat_completi…</div><div class="du mono">11.92ms</div><div class="sp">1</div><div class="badge err"><i></i><b>1 ERROR</b></div><div class="lat"></div></div>
<div class="row" style="top:596.5px"><div class="ts mono">Today 09:59:56 PM</div><div class="svc"><svg width="20" height="20" viewBox="0 0 20 20"><circle cx="9.9" cy="9.4" r="8.55" fill="none" stroke="#3b82f6" stroke-width="1.25"/><rect x="6.2" y="5.7" width="7.6" height="2.8" rx="1.2" fill="none" stroke="#5a6474" stroke-width="1.1"/><rect x="6.2" y="9.5" width="7.6" height="3.6" rx="1.2" fill="none" stroke="#5a6474" stroke-width="1.1"/></svg></div><div class="svn mono">default</div><div class="op mono">openwebui.chat_completi…</div><div class="du mono">13.89ms</div><div class="sp">1</div><div class="badge err"><i></i><b>1 ERROR</b></div><div class="lat"></div></div>
<div class="row" style="top:625.5px"><div class="ts mono">Today 09:59:54 PM</div><div class="svc"><svg width="20" height="20" viewBox="0 0 20 20"><circle cx="9.9" cy="9.4" r="8.55" fill="none" stroke="#3b82f6" stroke-width="1.25"/><rect x="6.2" y="5.7" width="7.6" height="2.8" rx="1.2" fill="none" stroke="#5a6474" stroke-width="1.1"/><rect x="6.2" y="9.5" width="7.6" height="3.6" rx="1.2" fill="none" stroke="#5a6474" stroke-width="1.1"/></svg></div><div class="svn mono">default</div><div class="op mono">openwebui.chat_completi…</div><div class="du mono">2.28s</div><div class="sp">1</div><div class="badge ok"><i></i><b>SUCCESS</b></div><div class="lat"></div></div>
<div class="row" style="top:654.5px"><div class="ts mono">Today 09:59:52 PM</div><div class="svc"><svg width="20" height="20" viewBox="0 0 20 20"><circle cx="9.9" cy="9.4" r="8.55" fill="none" stroke="#3b82f6" stroke-width="1.25"/><rect x="6.2" y="5.7" width="7.6" height="2.8" rx="1.2" fill="none" stroke="#5a6474" stroke-width="1.1"/><rect x="6.2" y="9.5" width="7.6" height="3.6" rx="1.2" fill="none" stroke="#5a6474" stroke-width="1.1"/></svg></div><div class="svn mono">default</div><div class="op mono">openwebui.chat_completi…</div><div class="du mono">2.08s</div><div class="sp">1</div><div class="badge ok"><i></i><b>SUCCESS</b></div><div class="lat"></div></div>
<div class="row" style="top:683.5px"><div class="ts mono">Today 09:59:48 PM</div><div class="svc"><svg width="20" height="20" viewBox="0 0 20 20"><circle cx="9.9" cy="9.4" r="8.55" fill="none" stroke="#3b82f6" stroke-width="1.25"/><rect x="6.2" y="5.7" width="7.6" height="2.8" rx="1.2" fill="none" stroke="#5a6474" stroke-width="1.1"/><rect x="6.2" y="9.5" width="7.6" height="3.6" rx="1.2" fill="none" stroke="#5a6474" stroke-width="1.1"/></svg></div><div class="svn mono">default</div><div class="op mono">openwebui.chat_completi…</div><div class="du mono">4.09s</div><div class="sp">1</div><div class="badge ok"><i></i><b>SUCCESS</b></div><div class="lat"></div></div>
<div class="row" style="top:712.5px"><div class="ts mono">Today 09:59:46 PM</div><div class="svc"><svg width="20" height="20" viewBox="0 0 20 20"><circle cx="9.9" cy="9.4" r="8.55" fill="none" stroke="#3b82f6" stroke-width="1.25"/><rect x="6.2" y="5.7" width="7.6" height="2.8" rx="1.2" fill="none" stroke="#5a6474" stroke-width="1.1"/><rect x="6.2" y="9.5" width="7.6" height="3.6" rx="1.2" fill="none" stroke="#5a6474" stroke-width="1.1"/></svg></div><div class="svn mono">default</div><div class="op mono">openwebui.chat_completi…</div><div class="du mono">2.30s</div><div class="sp">1</div><div class="badge ok"><i></i><b>SUCCESS</b></div><div class="lat"></div></div>
<div class="row" style="top:741.5px"><div class="ts mono">Today 09:59:44 PM</div><div class="svc"><svg width="20" height="20" viewBox="0 0 20 20"><circle cx="9.9" cy="9.4" r="8.55" fill="none" stroke="#3b82f6" stroke-width="1.25"/><rect x="6.2" y="5.7" width="7.6" height="2.8" rx="1.2" fill="none" stroke="#5a6474" stroke-width="1.1"/><rect x="6.2" y="9.5" width="7.6" height="3.6" rx="1.2" fill="none" stroke="#5a6474" stroke-width="1.1"/></svg></div><div class="svn mono">default</div><div class="op mono">openwebui.chat_completi…</div><div class="du mono">2.02s</div><div class="sp">1</div><div class="badge ok"><i></i><b>SUCCESS</b></div><div class="lat"></div></div>
<div class="row" style="top:770.5px"><div class="ts mono">Today 09:59:41 PM</div><div class="svc"><svg width="20" height="20" viewBox="0 0 20 20"><circle cx="9.9" cy="9.4" r="8.55" fill="none" stroke="#3b82f6" stroke-width="1.25"/><rect x="6.2" y="5.7" width="7.6" height="2.8" rx="1.2" fill="none" stroke="#5a6474" stroke-width="1.1"/><rect x="6.2" y="9.5" width="7.6" height="3.6" rx="1.2" fill="none" stroke="#5a6474" stroke-width="1.1"/></svg></div><div class="svn mono">default</div><div class="op mono">openwebui.chat_completi…</div><div class="du mono">2.62s</div><div class="sp">1</div><div class="badge ok"><i></i><b>SUCCESS</b></div><div class="lat"></div></div>
<div class="row" style="top:799.5px"><div class="ts mono">Today 09:59:38 PM</div><div class="svc"><svg width="20" height="20" viewBox="0 0 20 20"><circle cx="9.9" cy="9.4" r="8.55" fill="none" stroke="#3b82f6" stroke-width="1.25"/><rect x="6.2" y="5.7" width="7.6" height="2.8" rx="1.2" fill="none" stroke="#5a6474" stroke-width="1.1"/><rect x="6.2" y="9.5" width="7.6" height="3.6" rx="1.2" fill="none" stroke="#5a6474" stroke-width="1.1"/></svg></div><div class="svn mono">default</div><div class="op mono">openwebui.chat_completi…</div><div class="du mono">2.83s</div><div class="sp">1</div><div class="badge ok"><i></i><b>SUCCESS</b></div><div class="lat"></div></div>
<div class="row" style="top:828.5px"><div class="ts mono">Today 09:59:36 PM</div><div class="svc"><svg width="20" height="20" viewBox="0 0 20 20"><circle cx="9.9" cy="9.4" r="8.55" fill="none" stroke="#3b82f6" stroke-width="1.25"/><rect x="6.2" y="5.7" width="7.6" height="2.8" rx="1.2" fill="none" stroke="#5a6474" stroke-width="1.1"/><rect x="6.2" y="9.5" width="7.6" height="3.6" rx="1.2" fill="none" stroke="#5a6474" stroke-width="1.1"/></svg></div><div class="svn mono">default</div><div class="op mono">openwebui.chat_completi…</div><div class="du mono">2.46s</div><div class="sp">1</div><div class="badge ok"><i></i><b>SUCCESS</b></div><div class="lat"></div></div>
<div class="row" style="top:857.5px"><div class="ts mono">Today 09:59:34 PM</div><div class="svc"><svg width="20" height="20" viewBox="0 0 20 20"><circle cx="9.9" cy="9.4" r="8.55" fill="none" stroke="#3b82f6" stroke-width="1.25"/><rect x="6.2" y="5.7" width="7.6" height="2.8" rx="1.2" fill="none" stroke="#5a6474" stroke-width="1.1"/><rect x="6.2" y="9.5" width="7.6" height="3.6" rx="1.2" fill="none" stroke="#5a6474" stroke-width="1.1"/></svg></div><div class="svn mono">default</div><div class="op mono">openwebui.chat_completi…</div><div class="du mono">1.94s</div><div class="sp">1</div><div class="badge ok"><i></i><b>SUCCESS</b></div><div class="lat"></div></div>
<!--/ROWS-->

</body></html>
